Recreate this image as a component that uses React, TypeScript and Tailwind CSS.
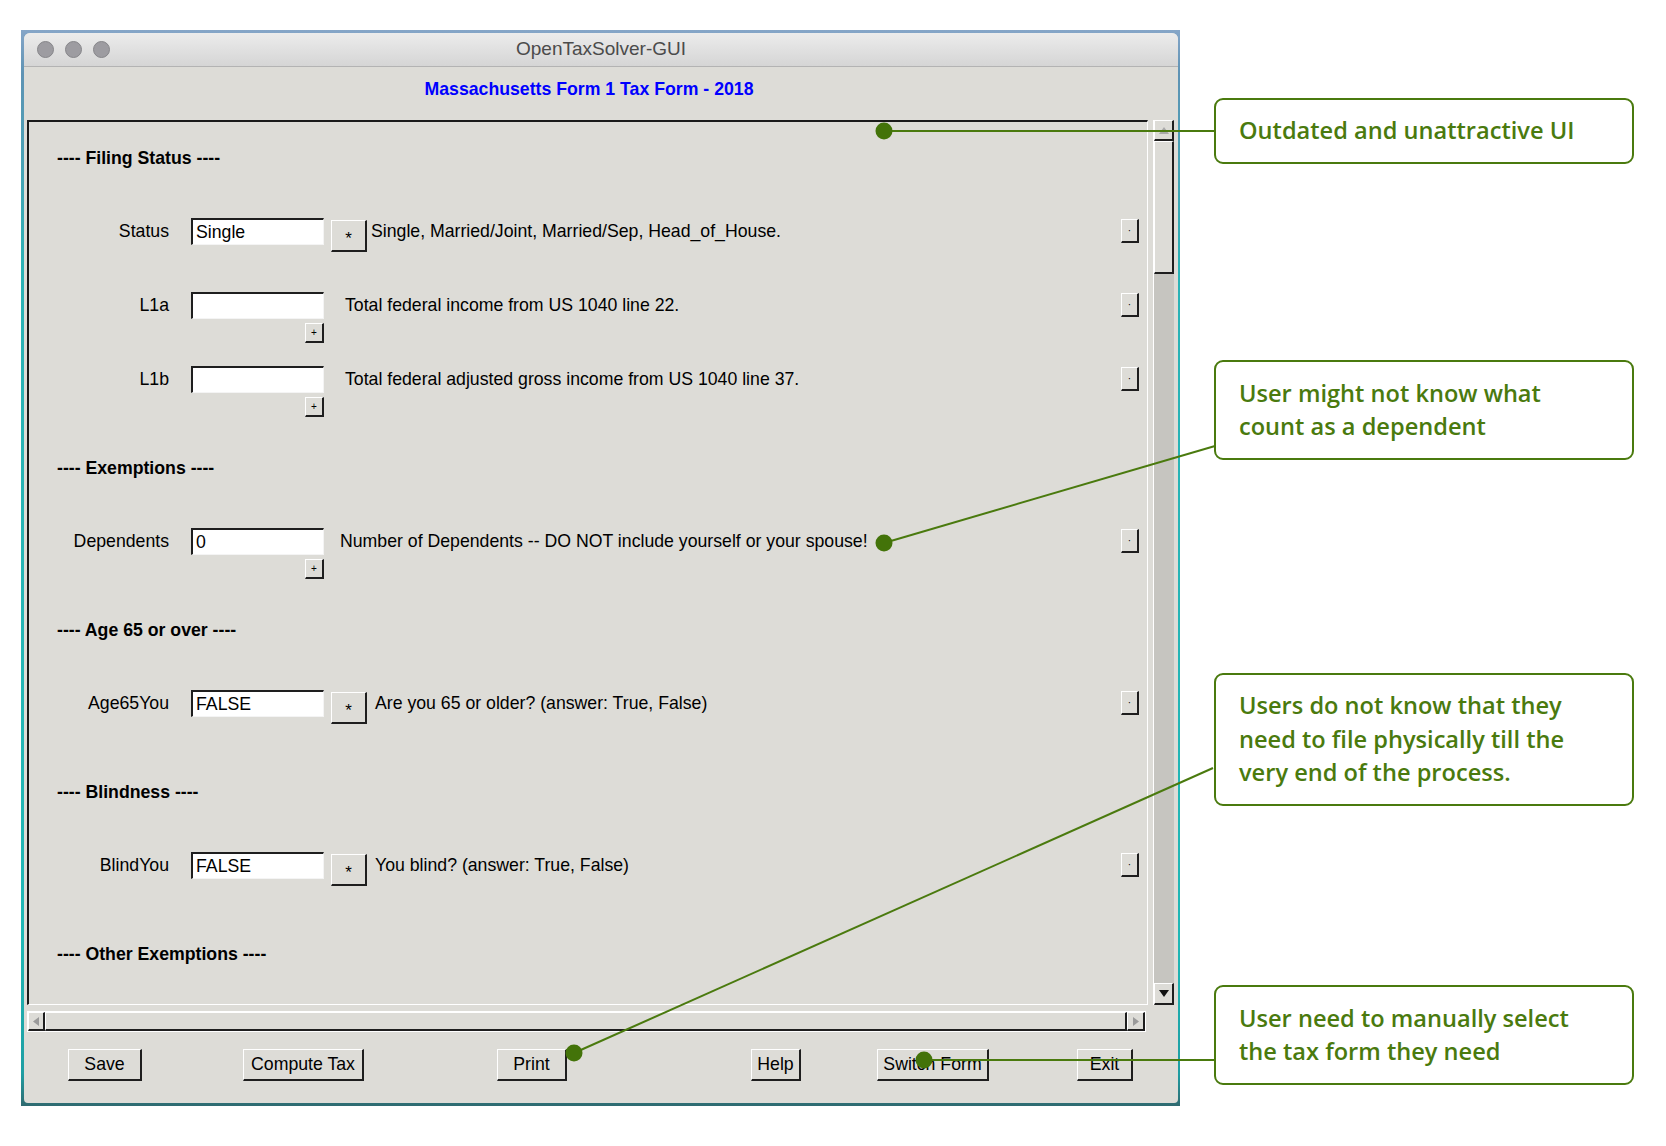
import React from "react";

const raised =
  "border-t border-l border-b-2 border-r-2 border-t-white border-l-white border-b-[#1e1e1e] border-r-[#1e1e1e] bg-[#dddcd7]";

function SmallRight() {
  return (
    <div className={`mr-[8px] mt-[1px] flex h-[24px] w-[18px] items-center justify-center text-[10px] leading-none text-black ${raised}`}>
      ·
    </div>
  );
}

function Input({ value }: { value: string }) {
  return (
    <div className="flex h-[27px] w-[133px] items-center border-t-2 border-l-2 border-b border-r border-t-[#1e1e1e] border-l-[#1e1e1e] border-b-[#f4f4f4] border-r-[#f4f4f4] bg-white pl-[3px] text-[17.7px] text-black">
      {value}
    </div>
  );
}

function Plus() {
  return (
    <div className={`flex h-[20px] w-[19px] items-center justify-center text-[10px] leading-none text-black ${raised}`}>
      +
    </div>
  );
}

function Star() {
  return (
    <div className={`ml-[7px] mt-[2px] flex h-[32px] w-[36px] items-center justify-center pt-[6px] text-[17px] leading-none text-black ${raised}`}>
      *
    </div>
  );
}

function Header({ text, first }: { text: string; first?: boolean }) {
  return (
    <div className={`flex h-[74px] items-center pl-[28px] text-[17.7px] font-bold text-black ${first ? "-mt-[1px]" : "mt-[14px]"}`}>
      {text}
    </div>
  );
}

function Row({
  label,
  value,
  star,
  plus,
  desc,
  descClass,
}: {
  label: string;
  value: string;
  star?: boolean;
  plus?: boolean;
  desc: string;
  descClass: string;
}) {
  return (
    <div className="flex h-[74px] items-start pt-[23px] text-[17.7px] text-black">
      <div className="flex h-[27px] w-[140px] shrink-0 items-center justify-end">{label}</div>
      <div className="ml-[22px] flex shrink-0 flex-col items-end gap-[4px]">
        <Input value={value} />
        {plus && <Plus />}
      </div>
      {star && <Star />}
      <div className={`flex h-[27px] items-center whitespace-nowrap ${descClass}`}>{desc}</div>
      <div className="flex-1" />
      <SmallRight />
    </div>
  );
}

function Callout({ className, children }: { className: string; children: React.ReactNode }) {
  return (
    <div
      className={`flex w-[420px] items-center rounded-[9px] border-2 border-[#4a7a0e] pl-[23px] font-['Open_Sans',sans-serif] text-[23.6px] font-semibold leading-[33.5px] text-[#4a7a0e] ${className}`}
    >
      <div>{children}</div>
    </div>
  );
}

function BottomBtn({ label, className }: { label: string; className: string }) {
  return (
    <div className={`flex h-[32px] items-center justify-center text-[17.7px] text-black ${raised} ${className}`}>
      {label}
    </div>
  );
}

export default function App() {
  return (
    <div className="relative flex h-[1146px] w-[1666px] overflow-hidden bg-white font-['Liberation_Sans',Arial,sans-serif]">
      {/* desktop wallpaper frame */}
      <div className="ml-[21px] mt-[30px] h-[1076px] w-[1159px] shrink-0 bg-[linear-gradient(180deg,#86a6c8_0%,#5f93b4_4%,#2bb2b6_22%,#1fb7b5_85%,#1e9ea3_97%,#2f6a70_100%)] pb-[3px] pl-[3px] pr-[2px] pt-[3px]">
        {/* window */}
        <div className="flex h-[1070px] w-[1154px] flex-col overflow-hidden rounded-t-[6px] rounded-b-[4px] bg-[#dddcd7]">
          {/* title bar */}
          <div className="relative flex h-[34px] shrink-0 items-center justify-center border-b border-[#b3b3b3] bg-[linear-gradient(180deg,#ececec,#d5d5d5)]">
            <div className="absolute left-[13px] top-[8px] flex gap-[11px]">
              <div className="h-[17px] w-[17px] rounded-full border border-[#86868a] bg-[#9d9ca1]" />
              <div className="h-[17px] w-[17px] rounded-full border border-[#86868a] bg-[#9d9ca1]" />
              <div className="h-[17px] w-[17px] rounded-full border border-[#86868a] bg-[#9d9ca1]" />
            </div>
            <span className="text-[19px] text-[#4b4b4b]">OpenTaxSolver-GUI</span>
          </div>
          {/* heading */}
          <div className="flex h-[53px] shrink-0 justify-center pr-[24px] pt-[10px]">
            <span className="text-[17.7px] font-bold leading-[24px] text-[#0000ff]">
              Massachusetts Form 1 Tax Form - 2018
            </span>
          </div>
          {/* scroll row */}
          <div className="flex h-[885px] shrink-0 pl-[3px]">
            <div className="h-[885px] w-[1121px] overflow-hidden border-t-2 border-l-2 border-b border-r border-t-[#1a1a1a] border-l-[#1a1a1a] border-b-white border-r-white">
              <Header text="---- Filing Status ----" first />
              <Row label="Status" value="Single" star desc="Single, Married/Joint, Married/Sep, Head_of_House." descClass="ml-[4px]" />
              <Row label="L1a" value="" plus desc="Total federal income from US 1040 line 22." descClass="ml-[21px]" />
              <Row label="L1b" value="" plus desc="Total federal adjusted gross income from US 1040 line 37." descClass="ml-[21px]" />
              <Header text="---- Exemptions ----" />
              <Row label="Dependents" value="0" plus desc="Number of Dependents -- DO NOT include yourself or your spouse!" descClass="ml-[16px]" />
              <Header text="---- Age 65 or over ----" />
              <Row label="Age65You" value="FALSE" star desc="Are you 65 or older? (answer: True, False)" descClass="ml-[8px]" />
              <Header text="---- Blindness ----" />
              <Row label="BlindYou" value="FALSE" star desc="You blind? (answer: True, False)" descClass="ml-[8px]" />
              <Header text="---- Other Exemptions ----" />
            </div>
            {/* vertical scrollbar */}
            <div className="ml-[5px] flex h-[885px] w-[21px] flex-col border-l border-white bg-[#c6c5c0]">
              <div className={`flex h-[21px] w-[20px] shrink-0 items-center justify-center ${raised}`}>
                <svg width="10" height="7" viewBox="0 0 10 7">
                  <path d="M5 0 L10 7 L0 7 Z" fill="#a9a9a9" />
                </svg>
              </div>
              <div className={`h-[133px] w-[20px] shrink-0 ${raised}`} />
              <div className="flex-1" />
              <div className={`flex h-[22px] w-[20px] shrink-0 items-center justify-center ${raised}`}>
                <svg width="10" height="7" viewBox="0 0 10 7">
                  <path d="M0 0 L10 0 L5 7 Z" fill="#111" />
                </svg>
              </div>
            </div>
          </div>
          {/* horizontal scrollbar */}
          <div className="ml-[3px] mt-[6px] flex h-[21px] w-[1119px] shrink-0 border border-white bg-[#c6c5c0]">
            <div className={`flex h-[19px] w-[17px] shrink-0 items-center justify-center ${raised}`}>
              <svg width="6" height="9" viewBox="0 0 6 9">
                <path d="M0 4.5 L6 0 L6 9 Z" fill="#9a9a9a" />
              </svg>
            </div>
            <div className={`h-[19px] flex-1 ${raised}`} />
            <div className={`flex h-[19px] w-[18px] shrink-0 items-center justify-center ${raised}`}>
              <svg width="6" height="9" viewBox="0 0 6 9">
                <path d="M6 4.5 L0 0 L0 9 Z" fill="#9a9a9a" />
              </svg>
            </div>
          </div>
          {/* buttons */}
          <div className="flex h-[71px] shrink-0 items-start pt-[17px]">
            <BottomBtn label="Save" className="ml-[44px] w-[74px]" />
            <BottomBtn label="Compute Tax" className="ml-[101px] w-[121px]" />
            <BottomBtn label="Print" className="ml-[133px] w-[70px]" />
            <BottomBtn label="Help" className="ml-[184px] w-[50px]" />
            <BottomBtn label="Switch Form" className="ml-[76px] w-[112px]" />
            <BottomBtn label="Exit" className="ml-[88px] w-[56px]" />
          </div>
        </div>
      </div>

      {/* callouts column */}
      <div className="ml-[34px] flex shrink-0 flex-col">
        <Callout className="mt-[98px] h-[66px]">Outdated and unattractive UI</Callout>
        <Callout className="mt-[196px] h-[100px]">
          User might not know what
          <br />
          count as a dependent
        </Callout>
        <Callout className="mt-[213px] h-[133px]">
          Users do not know that they
          <br />
          need to file physically till the
          <br />
          very end of the process.
        </Callout>
        <Callout className="mt-[179px] h-[100px]">
          User need to manually select
          <br />
          the tax form they need
        </Callout>
      </div>

      {/* connector overlay */}
      <svg className="pointer-events-none absolute left-0 top-0" width="1666" height="1146" viewBox="0 0 1666 1146">
        <g stroke="#4a7a0e" strokeWidth="2" fill="none">
          <line x1="884" y1="131" x2="1214" y2="131" />
          <line x1="884" y1="543" x2="1215" y2="446" />
          <line x1="574" y1="1053" x2="1213" y2="768" />
          <line x1="924" y1="1060" x2="1214" y2="1060" />
        </g>
        <g fill="#437309">
          <circle cx="884" cy="131" r="8.5" />
          <circle cx="884" cy="543" r="8.5" />
          <circle cx="574" cy="1053" r="8.5" />
          <circle cx="924" cy="1060" r="8.5" />
        </g>
      </svg>
    </div>
  );
}
